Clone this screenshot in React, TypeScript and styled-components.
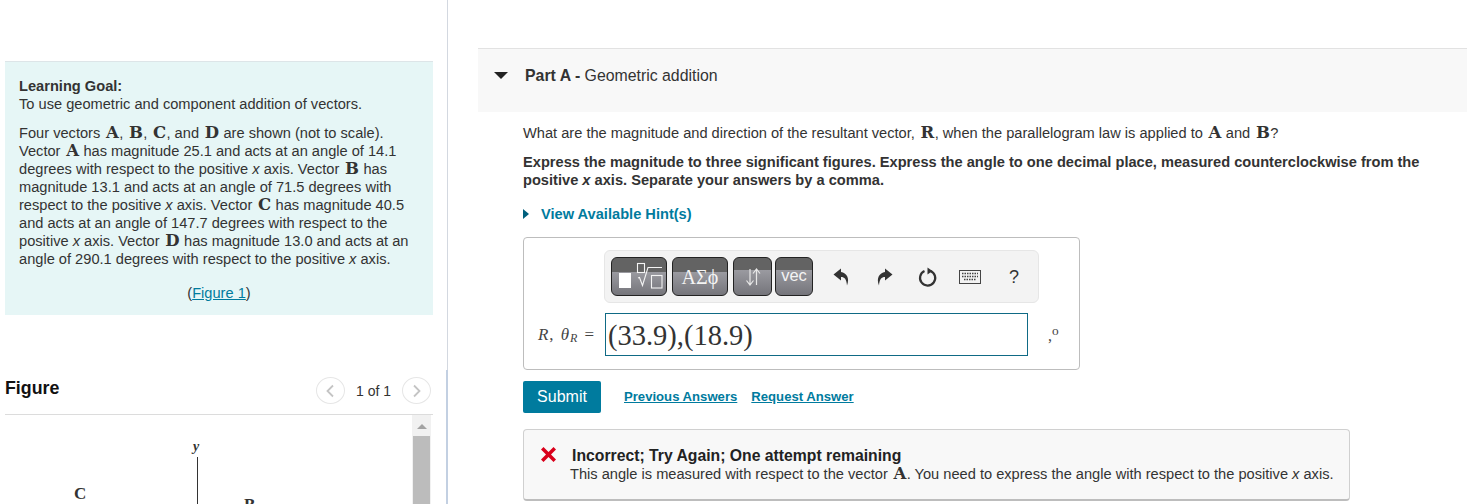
import styled, { createGlobalStyle } from "styled-components";
import { ReactNode } from "react";

const Global = createGlobalStyle`
  html, body { margin: 0; padding: 0; background: #fff; overflow: hidden; }
  body { font-family: "Liberation Sans", Arial, sans-serif; font-size: 14.63px; color: #333; }
  * { box-sizing: border-box; }
`;

const Page = styled.div`
  display: flex;
  width: 1484px;
  height: 504px;
  overflow: hidden;
`;

const LeftColumn = styled.aside`
  width: 448px;
  flex: none;
  height: 504px;
  padding: 61px 14px 0 5px;
  border-right: 1px solid #d3d8e0;
  position: relative;
`;

const DividerAccent = styled.div`
  position: absolute;
  right: -1px;
  top: 370px;
  bottom: 0;
  width: 2px;
  background: #c3d0e2;
`;

const GoalBox = styled.section`
  width: 428px;
  height: 254px;
  padding: 15px 14px 0;
  background: #e6f6f6;
  border-top: 1px solid #dde5e8;
  line-height: 18px;
`;

const GoalTitle = styled.div`
  font-weight: 700;
`;

const Para = styled.p`
  margin: 11px 0 0;
`;

const Vec = styled.b`
  font-family: "DejaVu Serif", "Liberation Serif", serif;
  font-size: 16.5px;
  font-weight: 700;
  line-height: 0;
  padding: 0 0.4px 0 1.6px;
`;

const Em = styled.i`
  font-style: italic;
`;

const FigureLinkRow = styled.div`
  margin-top: 16px;
  text-align: center;
`;

const TealLink = styled.a`
  color: #007b9e;
  text-decoration: underline;
`;

const FigureHeader = styled.header`
  margin-top: 54px;
  height: 46px;
  width: 428px;
  display: flex;
  align-items: flex-start;
  justify-content: space-between;
  border-bottom: 1px solid #dcdcdc;
`;

const FigureTitle = styled.h2`
  margin: 9px 0 0;
  font-size: 17.8px;
  line-height: 20px;
  font-weight: 700;
  color: #111;
`;

const Pager = styled.div`
  display: flex;
  align-items: center;
  gap: 11px;
  margin: 8px 2px 0 0;
  font-size: 14px;
`;

const PagerButton = styled.span`
  width: 29px;
  height: 27px;
  border: 1px solid #e6e6e6;
  border-radius: 50%;
  display: flex;
  align-items: center;
  justify-content: center;
`;

const FigureBody = styled.div`
  width: 428px;
  height: 90px;
  display: flex;
  justify-content: space-between;
`;

const FigureArt = styled.svg`
  width: 405px;
  height: 90px;
  flex: none;
`;

const ScrollBar = styled.div`
  width: 19px;
  margin-right: 2px;
  height: 90px;
  background: #f1f1f1;
  display: flex;
  flex-direction: column;
  align-items: center;
`;

const ScrollArrow = styled.div`
  margin-top: 9px;
  width: 0;
  height: 0;
  border-left: 5px solid transparent;
  border-right: 5px solid transparent;
  border-bottom: 5px solid #a3a3a3;
`;

const ScrollThumb = styled.div`
  margin-top: 7px;
  width: 17px;
  flex: 1;
  background: #bcbcbc;
`;

const RightColumn = styled.main`
  flex: 1;
  padding: 48px 17px 0 30px;
`;

const PartHeader = styled.div`
  height: 64px;
  background: #f8f8f8;
  border-top: 1px solid #e2e2e2;
  display: flex;
  align-items: flex-start;
  padding: 17px 0 0 16px;
  font-size: 15.85px;
  line-height: 20px;
`;

const Caret = styled.span`
  width: 0;
  height: 0;
  margin: 6px 17px 0 0;
  border-left: 7px solid transparent;
  border-right: 7px solid transparent;
  border-top: 7px solid #222;
`;

const PartBody = styled.div`
  padding: 12px 0 0 45px;
  line-height: 18px;
`;

const BoldNote = styled.p`
  margin: 11px 0 0;
  font-weight: 700;
`;

const HintRow = styled.div`
  margin-top: 16px;
  display: flex;
  align-items: center;
  font-weight: 700;
  color: #007b9e;
`;

const HintCaret = styled.span`
  width: 0;
  height: 0;
  margin-right: 12px;
  border-top: 5.5px solid transparent;
  border-bottom: 5.5px solid transparent;
  border-left: 6px solid #00607d;
`;

const AnswerBox = styled.div`
  margin-top: 14px;
  width: 557px;
  height: 133px;
  border: 1px solid #bdbdbd;
  border-radius: 4px;
  padding: 12px 12px 0 13px;
`;

const ToolbarRow = styled.div`
  display: flex;
  justify-content: flex-start;
  padding-left: 67px;
`;

const Toolbar = styled.div`
  width: 435px;
  height: 53px;
  background: #f3f3f3;
  border: 1px solid #e6e6e6;
  border-radius: 6px;
  padding: 6px 0 0 6px;
  display: flex;
  align-items: flex-start;
`;

const ToolButton = styled.div<{ $w: number; $gap: number; $band: number }>`
  width: ${(p) => p.$w}px;
  height: 39px;
  flex: none;
  margin-right: ${(p) => p.$gap}px;
  border: 1px solid #222;
  border-radius: 6px;
  color: #f4f4f4;
  display: flex;
  align-items: center;
  justify-content: center;
  background: linear-gradient(
    to bottom,
    #636363 0,
    #636363 ${(p) => p.$band}px,
    #9a9aa0 ${(p) => p.$band}px,
    #75757b 100%
  );
`;

const GreekLabel = styled.span`
  font-family: "Liberation Serif", serif;
  font-size: 20px;
  letter-spacing: 0.2px;
`;

const VecLabel = styled.span`
  font-size: 16.5px;
  margin-top: -4px;
`;

const IconSlot = styled.div<{ $w: number }>`
  width: ${(p) => p.$w}px;
  height: 39px;
  flex: none;
  display: flex;
  align-items: center;
  justify-content: center;
  color: #333;
`;

const HelpMark = styled.span`
  font-size: 18px;
  color: #333;
`;

const InputRow = styled.div`
  display: flex;
  align-items: center;
  margin-top: 10px;
`;

const InputLabel = styled.span`
  width: 68px;
  flex: none;
  padding-right: 10px;
  text-align: right;
  font-family: "Liberation Serif", serif;
  font-size: 17px;
  letter-spacing: 0.8px;
  word-spacing: 1.5px;
  color: #444;
  white-space: nowrap;
`;

const Sub = styled.sub`
  font-size: 12px;
  line-height: 0;
  vertical-align: -2px;
  font-style: italic;
`;

const MathInput = styled.div`
  width: 423px;
  height: 43px;
  border: 1px solid #0f6a85;
  font-family: "Liberation Serif", serif;
  font-size: 28.5px;
  line-height: 43px;
  padding-left: 2px;
  color: #333;
`;

const Units = styled.span`
  margin-left: 20px;
  margin-top: 0;
  font-family: "Liberation Serif", serif;
  font-size: 16px;
  color: #444;
  line-height: 1;
`;

const ActionRow = styled.div`
  margin-top: 11px;
  display: flex;
  align-items: center;
  font-size: 13.13px;
  font-weight: 700;
`;

const SubmitButton = styled.button`
  width: 78px;
  height: 32px;
  margin-right: 23px;
  background: #007b9e;
  color: #fff;
  border: 0;
  border-radius: 2px;
  font: inherit;
  font-size: 16px;
  font-weight: 400;
`;

const ActionLink = styled(TealLink)`
  margin-right: 14px;
`;

const Feedback = styled.div`
  margin-top: 16px;
  width: 827px;
  height: 72px;
  background: #f8f8f8;
  border: 1px solid #d0d0d0;
  border-bottom: 2px solid #bdbdbd;
  border-radius: 4px;
  padding: 16px 0 0 16px;
  display: flex;
  align-items: flex-start;
`;

const FeedbackIcon = styled.svg`
  width: 17px;
  height: 17px;
  flex: none;
  margin-right: 15px;
`;

const FeedbackText = styled.div`
  margin-left: -2px;
  line-height: 18px;
`;

const FeedbackTitle = styled.div`
  font-size: 15.76px;
  line-height: 19px;
  font-weight: 700;
  color: #222;
  padding-left: 2px;
`;

function V({ children }: { children: ReactNode }) {
  return <Vec>{children}</Vec>;
}

export default function App() {
  return (
    <Page>
      <Global />
      <LeftColumn>
        <DividerAccent />
        <GoalBox>
          <GoalTitle>Learning Goal:</GoalTitle>
          <div>To use geometric and component addition of vectors.</div>
          <Para>
            Four vectors <V>A</V>, <V>B</V>, <V>C</V>, and <V>D</V> are shown (not to scale).
            <br />
            Vector <V>A</V> has magnitude 25.1 and acts at an angle of 14.1
            <br />
            degrees with respect to the positive <Em>x</Em> axis. Vector <V>B</V> has
            <br />
            magnitude 13.1 and acts at an angle of 71.5 degrees with
            <br />
            respect to the positive <Em>x</Em> axis. Vector <V>C</V> has magnitude 40.5
            <br />
            and acts at an angle of 147.7 degrees with respect to the
            <br />
            positive <Em>x</Em> axis. Vector <V>D</V> has magnitude 13.0 and acts at an
            <br />
            angle of 290.1 degrees with respect to the positive <Em>x</Em> axis.
          </Para>
          <FigureLinkRow>
            (<TealLink>Figure 1</TealLink>)
          </FigureLinkRow>
        </GoalBox>
        <FigureHeader>
          <FigureTitle>Figure</FigureTitle>
          <Pager>
            <PagerButton>
              <svg width="10" height="14" viewBox="0 0 10 14" fill="none" stroke="#c4c4c4" strokeWidth="1.8">
                <path d="M8 1.5 2.5 7 8 12.5" />
              </svg>
            </PagerButton>
            <span>1 of 1</span>
            <PagerButton>
              <svg width="10" height="14" viewBox="0 0 10 14" fill="none" stroke="#c4c4c4" strokeWidth="1.8">
                <path d="M2 1.5 7.5 7 2 12.5" />
              </svg>
            </PagerButton>
          </Pager>
        </FigureHeader>
        <FigureBody>
          <FigureArt viewBox="0 0 405 90">
            <text x="188" y="36" fontFamily="Liberation Serif, serif" fontStyle="italic" fontWeight="700" fontSize="14" fill="#333">y</text>
            <line x1="192.5" y1="42" x2="192.5" y2="90" stroke="#333" strokeWidth="1" />
            <text x="69" y="84" fontFamily="Liberation Serif, serif" fontWeight="700" fontSize="17" fill="#333">C</text>
            <text x="239" y="95" fontFamily="Liberation Serif, serif" fontWeight="700" fontSize="17" fill="#333">B</text>
            <line x1="66" y1="89.5" x2="74" y2="90" stroke="#333" strokeWidth="1" />
          </FigureArt>
          <ScrollBar>
            <ScrollArrow />
            <ScrollThumb />
          </ScrollBar>
        </FigureBody>
      </LeftColumn>
      <RightColumn>
        <PartHeader>
          <Caret />
          <span>
            <b>Part A - </b>Geometric addition
          </span>
        </PartHeader>
        <PartBody>
          <div>
            What are the magnitude and direction of the resultant vector, <V>R</V>, when the parallelogram law is applied to <V>A</V> and <V>B</V>?
          </div>
          <BoldNote>
            Express the magnitude to three significant figures. Express the angle to one decimal place, measured counterclockwise from the
            <br />
            positive <Em>x</Em> axis. Separate your answers by a comma.
          </BoldNote>
          <HintRow>
            <HintCaret />
            View Available Hint(s)
          </HintRow>
          <AnswerBox>
            <ToolbarRow>
              <Toolbar>
                <ToolButton $w={56} $gap={5} $band={14}>
                  <svg width="54" height="37" viewBox="0 0 54 37" fill="none" stroke="#f4f4f4" strokeWidth="1.100">
                    <rect x="7" y="15" width="12" height="15" fill="#fff" stroke="none" />
                    <rect x="25.500" y="5.500" width="7" height="9" />
                    <path d="M26 20l1.500-.5 3 8L36 9.500H50" />
                    <rect x="39.500" y="17.500" width="10.500" height="12.500" />
                  </svg>
                </ToolButton>
                <ToolButton $w={56} $gap={5} $band={14}>
                  <GreekLabel>ΑΣϕ</GreekLabel>
                </ToolButton>
                <ToolButton $w={39} $gap={3} $band={12}>
                  <svg width="18" height="20" viewBox="0 0 18 20" fill="none" stroke="#e8e8e8" strokeWidth="1.2">
                    <path d="M6 2v15M2.500 13.500 6 18l3.500-4.500M12.500 18V3M9 6.500 12.500 2 16 6.500" />
                  </svg>
                </ToolButton>
                <ToolButton $w={38} $gap={5} $band={12}>
                  <VecLabel>vec</VecLabel>
                </ToolButton>
                <IconSlot $w={47}>
                  <svg width="17" height="18" viewBox="0 0 17 18" fill="#333">
                    <path d="M8 0.500 0.500 6.500 8 12.500V9c3.500 0 5.500 2 6 8.500 3-7.500-.5-12.500-6-13.500z" />
                  </svg>
                </IconSlot>
                <IconSlot $w={38}>
                  <svg width="17" height="18" viewBox="0 0 17 18" fill="#333">
                    <path d="M9 0.500 16.500 6.500 9 12.500V9c-3.500 0-5.500 2-6 8.500-3-7.500.5-12.500 6-13.500z" />
                  </svg>
                </IconSlot>
                <IconSlot $w={50}>
                  <svg width="20" height="20" viewBox="0 0 20 20" fill="none" stroke="#333" strokeWidth="2.2">
                    <path d="M12.500 3.900A7.600 7.600 0 1 1 6.500 4" />
                    <path d="M9.500 0.500v7l5-3.500z" fill="#333" stroke="none" />
                  </svg>
                </IconSlot>
                <IconSlot $w={34}>
                  <svg width="22" height="14" viewBox="0 0 22 14" fill="none" stroke="#444">
                    <rect x="0.500" y="0.500" width="21" height="13" />
                    <path d="M3 3.500h16M3 6.500h16M5 9.500h12" strokeDasharray="1.500 1" strokeWidth="1.500" />
                  </svg>
                </IconSlot>
                <IconSlot $w={54}>
                  <HelpMark>?</HelpMark>
                </IconSlot>
              </Toolbar>
            </ToolbarRow>
            <InputRow>
              <InputLabel>
                <Em>R</Em>, <Em>θ</Em>
                <Sub>R</Sub> =
              </InputLabel>
              <MathInput>(33.9),(18.9)</MathInput>
              <Units>
                ,<sup>o</sup>
              </Units>
            </InputRow>
          </AnswerBox>
          <ActionRow>
            <SubmitButton>Submit</SubmitButton>
            <ActionLink>Previous Answers</ActionLink>
            <ActionLink>Request Answer</ActionLink>
          </ActionRow>
          <Feedback>
            <FeedbackIcon viewBox="0 0 17 17">
              <path d="M1 3.500 3.500 1 8.500 6 13.500 1 16 3.500 11 8.500 16 13.500 13.500 16 8.500 11 3.500 16 1 13.500 6 8.500z" fill="#d9001b" />
            </FeedbackIcon>
            <FeedbackText>
              <FeedbackTitle>Incorrect; Try Again; One attempt remaining</FeedbackTitle>
              This angle is measured with respect to the vector <V>A</V>. You need to express the angle with respect to the positive <Em>x</Em> axis.
            </FeedbackText>
          </Feedback>
        </PartBody>
      </RightColumn>
    </Page>
  );
}
